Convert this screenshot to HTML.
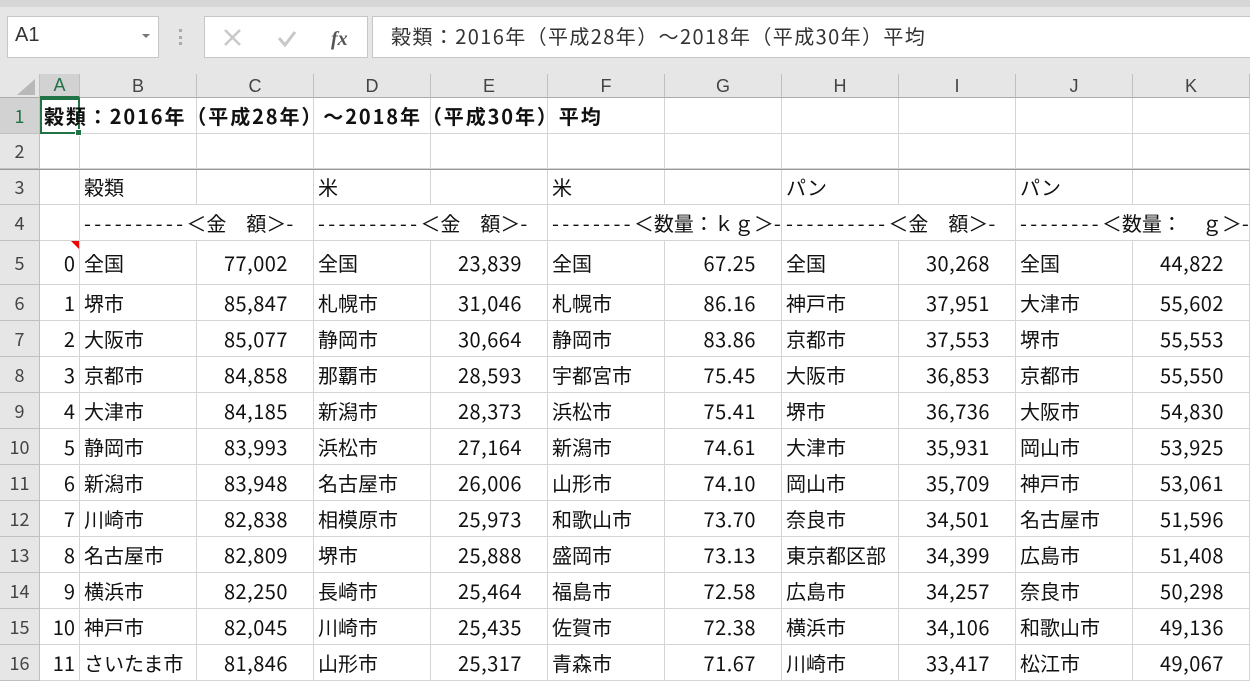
<!DOCTYPE html>
<html><head><meta charset="utf-8"><style>
*{margin:0;padding:0;box-sizing:border-box}
body{width:1250px;height:678px;overflow:hidden;background:#e6e6e6;font-family:"Noto Sans CJK JP",sans-serif;position:relative}
.top{position:absolute;left:0;top:0;width:1250px;height:7px;background:#d6d6d6}
.box{position:absolute;background:#fff;border:1px solid #c6c6c6}
.grid{position:absolute;left:0;top:74px;width:1250px;background:#fff}
.r{display:flex;height:36px}
.c{flex:none;border-right:1px solid #d4d4d4;border-bottom:1px solid #d4d4d4;font-size:20px;line-height:24px;color:#111;white-space:nowrap;overflow:visible;display:flex;align-items:center;padding:0 4px;font-family:"Noto Sans CJK JP",sans-serif}
.c:nth-child(1){width:40px;background:#e6e6e6;color:#444;justify-content:center;font-size:18px;border-color:#c0c0c0}
.c:nth-child(2){width:40px;justify-content:flex-end}
.c:nth-child(n+3){width:117px}
.c.n{justify-content:flex-end;padding-right:25px;letter-spacing:0.5px}
.h .c{background:#e6e6e6;color:#444;justify-content:center;font-size:18px;border-color:#c0c0c0;border-bottom:1px solid #ababab;font-family:"Liberation Sans",sans-serif}
.h{height:24px}
.d{letter-spacing:3.3px}
</style></head><body>
<div class="top"></div>
<div class="box" style="left:7px;top:16px;width:152px;height:42px"><span style="position:absolute;left:7px;top:7px;font-size:20px;color:#333;font-family:'Liberation Sans',sans-serif">A1</span><span style="position:absolute;right:8px;top:17px;width:0;height:0;border-left:4px solid transparent;border-right:4px solid transparent;border-top:4px solid #777"></span></div>
<div style="position:absolute;left:179px;top:29px;width:3px;height:16px;border-left:3px dotted #aaa"></div>
<div class="box" style="left:204px;top:16px;width:164px;height:42px">
<svg width="164" height="42" style="position:absolute;left:0;top:0"><path d="M20 13l15 15M35 13l-15 15" stroke="#c8c8c8" stroke-width="2.5" fill="none"/><path d="M74 21l6 7l10-13" stroke="#c8c8c8" stroke-width="3" fill="none"/><text x="126" y="28" font-family="Liberation Serif" font-style="italic" font-weight="bold" font-size="20" fill="#555">fx</text></svg></div>
<div class="box" style="left:372px;top:16px;width:880px;height:42px"><span style="position:absolute;left:18px;top:6px;font-size:20px;line-height:26px;color:#333;letter-spacing:1.4px">穀類：2016年（平成28年）～2018年（平成30年）平均</span></div>
<div class="grid">
<div class="r h"><div class="c" style="background:#e6e6e6;position:relative"><svg width="22" height="16" style="position:absolute;right:2px;bottom:2px"><path d="M20 0V16H2Z" fill="#b8b8b8"/></svg></div><div class="c" style="background:#d2d2d2;color:#217346;border-bottom:2px solid #217346">A</div><div class="c">B</div><div class="c">C</div><div class="c">D</div><div class="c">E</div><div class="c">F</div><div class="c">G</div><div class="c">H</div><div class="c">I</div><div class="c">J</div><div class="c">K</div></div>
<div class="r"><div class="c" style="background:#d2d2d2;color:#217346">1</div><div class="c" style="justify-content:flex-start;font-weight:bold;position:relative;border:2px solid #217346;padding-left:2px;letter-spacing:1.9px">穀類：2016年（平成28年）～2018年（平成30年）平均<span style="position:absolute;right:-4px;bottom:-4px;width:7px;height:7px;background:#217346;border:1px solid #fff"></span></div><div class="c"></div><div class="c"></div><div class="c"></div><div class="c"></div><div class="c"></div><div class="c"></div><div class="c"></div><div class="c"></div><div class="c"></div><div class="c"></div></div>
<div class="r" style="border-bottom:1px solid #999"><div class="c">2</div><div class="c"></div><div class="c"></div><div class="c"></div><div class="c"></div><div class="c"></div><div class="c"></div><div class="c"></div><div class="c"></div><div class="c"></div><div class="c"></div><div class="c"></div></div>
<div class="r" style="height:35px"><div class="c">3</div><div class="c"></div><div class="c">穀類</div><div class="c"></div><div class="c">米</div><div class="c"></div><div class="c">米</div><div class="c"></div><div class="c">パン</div><div class="c"></div><div class="c">パン</div><div class="c"></div></div>
<div class="r"><div class="c">4</div><div class="c"></div><div class="c" style="border-right:none"><span class="d">----------</span>＜金　額＞<span class="d">-</span></div><div class="c"></div><div class="c" style="border-right:none"><span class="d">----------</span>＜金　額＞<span class="d">-</span></div><div class="c"></div><div class="c" style="border-right:none"><span class="d">--------</span>＜数量：ｋｇ＞<span class="d">-</span></div><div class="c"></div><div class="c" style="border-right:none"><span class="d">----------</span>＜金　額＞<span class="d">-</span></div><div class="c"></div><div class="c" style="border-right:none"><span class="d">--------</span>＜数量：　ｇ＞<span class="d">-</span></div><div class="c"></div></div>
<div class="r" style="height:44px"><div class="c">5</div><div class="c" style="position:relative">0<span style="position:absolute;right:0;top:0;border-left:8px solid transparent;border-top:8px solid #e00"></span></div><div class="c">全国</div><div class="c n">77,002</div><div class="c">全国</div><div class="c n">23,839</div><div class="c">全国</div><div class="c n">67.25</div><div class="c">全国</div><div class="c n">30,268</div><div class="c">全国</div><div class="c n">44,822</div></div>
<div class="r"><div class="c">6</div><div class="c">1</div><div class="c">堺市</div><div class="c n">85,847</div><div class="c">札幌市</div><div class="c n">31,046</div><div class="c">札幌市</div><div class="c n">86.16</div><div class="c">神戸市</div><div class="c n">37,951</div><div class="c">大津市</div><div class="c n">55,602</div></div>
<div class="r"><div class="c">7</div><div class="c">2</div><div class="c">大阪市</div><div class="c n">85,077</div><div class="c">静岡市</div><div class="c n">30,664</div><div class="c">静岡市</div><div class="c n">83.86</div><div class="c">京都市</div><div class="c n">37,553</div><div class="c">堺市</div><div class="c n">55,553</div></div>
<div class="r"><div class="c">8</div><div class="c">3</div><div class="c">京都市</div><div class="c n">84,858</div><div class="c">那覇市</div><div class="c n">28,593</div><div class="c">宇都宮市</div><div class="c n">75.45</div><div class="c">大阪市</div><div class="c n">36,853</div><div class="c">京都市</div><div class="c n">55,550</div></div>
<div class="r"><div class="c">9</div><div class="c">4</div><div class="c">大津市</div><div class="c n">84,185</div><div class="c">新潟市</div><div class="c n">28,373</div><div class="c">浜松市</div><div class="c n">75.41</div><div class="c">堺市</div><div class="c n">36,736</div><div class="c">大阪市</div><div class="c n">54,830</div></div>
<div class="r"><div class="c">10</div><div class="c">5</div><div class="c">静岡市</div><div class="c n">83,993</div><div class="c">浜松市</div><div class="c n">27,164</div><div class="c">新潟市</div><div class="c n">74.61</div><div class="c">大津市</div><div class="c n">35,931</div><div class="c">岡山市</div><div class="c n">53,925</div></div>
<div class="r"><div class="c">11</div><div class="c">6</div><div class="c">新潟市</div><div class="c n">83,948</div><div class="c">名古屋市</div><div class="c n">26,006</div><div class="c">山形市</div><div class="c n">74.10</div><div class="c">岡山市</div><div class="c n">35,709</div><div class="c">神戸市</div><div class="c n">53,061</div></div>
<div class="r"><div class="c">12</div><div class="c">7</div><div class="c">川崎市</div><div class="c n">82,838</div><div class="c">相模原市</div><div class="c n">25,973</div><div class="c">和歌山市</div><div class="c n">73.70</div><div class="c">奈良市</div><div class="c n">34,501</div><div class="c">名古屋市</div><div class="c n">51,596</div></div>
<div class="r"><div class="c">13</div><div class="c">8</div><div class="c">名古屋市</div><div class="c n">82,809</div><div class="c">堺市</div><div class="c n">25,888</div><div class="c">盛岡市</div><div class="c n">73.13</div><div class="c">東京都区部</div><div class="c n">34,399</div><div class="c">広島市</div><div class="c n">51,408</div></div>
<div class="r"><div class="c">14</div><div class="c">9</div><div class="c">横浜市</div><div class="c n">82,250</div><div class="c">長崎市</div><div class="c n">25,464</div><div class="c">福島市</div><div class="c n">72.58</div><div class="c">広島市</div><div class="c n">34,257</div><div class="c">奈良市</div><div class="c n">50,298</div></div>
<div class="r"><div class="c">15</div><div class="c">10</div><div class="c">神戸市</div><div class="c n">82,045</div><div class="c">川崎市</div><div class="c n">25,435</div><div class="c">佐賀市</div><div class="c n">72.38</div><div class="c">横浜市</div><div class="c n">34,106</div><div class="c">和歌山市</div><div class="c n">49,136</div></div>
<div class="r"><div class="c">16</div><div class="c">11</div><div class="c">さいたま市</div><div class="c n">81,846</div><div class="c">山形市</div><div class="c n">25,317</div><div class="c">青森市</div><div class="c n">71.67</div><div class="c">川崎市</div><div class="c n">33,417</div><div class="c">松江市</div><div class="c n">49,067</div></div>
</div>
</body></html>
